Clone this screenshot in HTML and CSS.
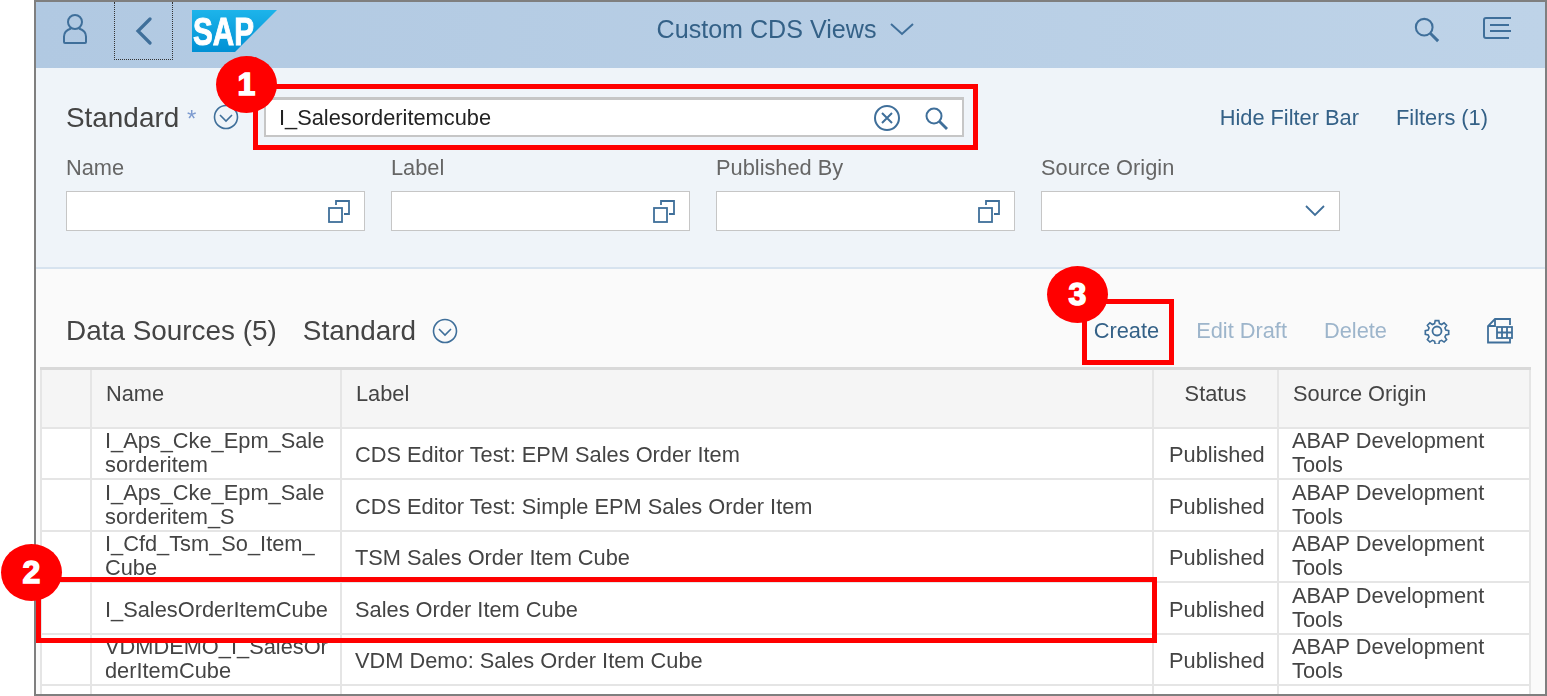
FILE: index.html
```html
<!DOCTYPE html>
<html lang="en">
<head>
    <meta charset="UTF-8">
    <title>Custom CDS Views</title>
    <link rel="stylesheet" href="styles.css">
</head>
<body>
    <div class="frame">
        <header class="shell">
            <div class="shell-left">
                <svg class="icon-user" width="24" height="30" viewBox="0 0 24 30" fill="none" stroke="#3f6f9a" stroke-width="2">
                    <circle cx="12" cy="8" r="7"/>
                    <path d="M8 14.500C3.500 16 1 18.500 1 22.500V28q0 1 1 1h20q1 0 1-1v-5.500c0-4-2.500-6.500-7-8"/>
                </svg>
                <button class="back">
                    <svg width="18" height="28" viewBox="0 0 18 28" fill="none" stroke="#3f6f9a" stroke-width="3.200" stroke-linecap="round">
                        <path d="M15 2L3 14l12 12"/>
                    </svg>
                </button>
                <svg class="logo" width="85" height="42" viewBox="0 0 85 42">
                    <defs>
                        <linearGradient id="sapBlue" x1="0" y1="0" x2="0" y2="1">
                            <stop offset="0" stop-color="#1db4ea"/>
                            <stop offset="1" stop-color="#0090d4"/>
                        </linearGradient>
                    </defs>
                    <polygon points="0,0 85,0 43,42 0,42" fill="url(#sapBlue)"/>
                    <text x="1" y="35" class="logo-text" textLength="61" lengthAdjust="spacingAndGlyphs">SAP</text>
                </svg>
            </div>
            <div class="shell-title">
                <span>Custom CDS Views</span>
                <svg width="24" height="14" viewBox="0 0 24 14" fill="none" stroke="#3f6f9a" stroke-width="2">
                    <path d="M1 2l11 10L23 2"/>
                </svg>
            </div>
            <div class="shell-right">
                <svg width="26" height="26" viewBox="0 0 28 28" fill="none" stroke="#3f6f9a" stroke-width="2.200">
                    <circle cx="11" cy="11" r="9"/>
                    <path d="M17.500 17.500L26 26" stroke-width="3.200"/>
                </svg>
                <svg width="30" height="22" viewBox="0 0 30 22" fill="none" stroke="#3f6f9a" stroke-width="2">
                    <path d="M29 1H4Q2 1 2 3v16q0 2 2 2h23M8 8h19M8 14h21"/>
                </svg>
            </div>
        </header>

        <section class="filterbar">
            <div class="filter-top">
                <span class="variant">Standard <em>*</em></span>
                <svg class="circle-down" width="26" height="26" viewBox="0 0 26 26" fill="none" stroke="#3f6f9a" stroke-width="1.600">
                    <circle cx="13" cy="13" r="11.500"/>
                    <path d="M7 11l6 6 6-6"/>
                </svg>
                <div class="search">
                    <span class="search-text">I_Salesorderitemcube</span>
                    <svg width="28" height="28" viewBox="0 0 28 28" fill="none" stroke="#3f6f9a" stroke-width="2">
                        <circle cx="14" cy="14" r="12"/>
                        <path d="M9 9l10 10M19 9L9 19"/>
                    </svg>
                    <svg width="24" height="24" viewBox="0 0 24 24" fill="none" stroke="#3f6f9a" stroke-width="2">
                        <circle cx="10" cy="10" r="7.500"/>
                        <path d="M15.500 15.500L23 23" stroke-width="2.800"/>
                    </svg>
                </div>
                <a class="link hide-bar">Hide Filter Bar</a>
                <a class="link">Filters (1)</a>
            </div>
            <div class="filter-fields">
                <div class="field">
                    <label>Name</label>
                    <div class="input">
                        <svg width="24" height="24" viewBox="0 0 24 24" fill="none" stroke="#3f6f9a" stroke-width="1.800"><path d="M9 6V2h13v13h-5"/><rect x="2" y="9" width="13" height="14"/></svg>
                    </div>
                </div>
                <div class="field">
                    <label>Label</label>
                    <div class="input">
                        <svg width="24" height="24" viewBox="0 0 24 24" fill="none" stroke="#3f6f9a" stroke-width="1.800"><path d="M9 6V2h13v13h-5"/><rect x="2" y="9" width="13" height="14"/></svg>
                    </div>
                </div>
                <div class="field">
                    <label>Published By</label>
                    <div class="input">
                        <svg width="24" height="24" viewBox="0 0 24 24" fill="none" stroke="#3f6f9a" stroke-width="1.800"><path d="M9 6V2h13v13h-5"/><rect x="2" y="9" width="13" height="14"/></svg>
                    </div>
                </div>
                <div class="field">
                    <label>Source Origin</label>
                    <div class="input">
                        <svg class="select-arrow" width="20" height="12" viewBox="0 0 20 12" fill="none" stroke="#3f6f9a" stroke-width="1.800"><path d="M1 1l9 9 9-9"/></svg>
                    </div>
                </div>
            </div>
        </section>

        <section class="results">
            <div class="toolbar">
                <span class="results-title">Data Sources (5)</span>
                <span class="results-title results-variant">Standard</span>
                <svg class="circle-down" width="26" height="26" viewBox="0 0 26 26" fill="none" stroke="#3f6f9a" stroke-width="1.600">
                    <circle cx="13" cy="13" r="11.500"/>
                    <path d="M7 11l6 6 6-6"/>
                </svg>
                <div class="actions">
                    <a class="link">Create</a>
                    <a class="link disabled">Edit Draft</a>
                    <a class="link disabled">Delete</a>
                    <svg width="26" height="26" viewBox="0 0 26 26" fill="none" stroke="#3f6f9a" stroke-width="1.800">
                        <circle cx="13" cy="13" r="4.500"/>
                        <path d="M11 1.500h4l.7 3.300 2.400 1 2.800-1.900 2.800 2.800-1.900 2.800 1 2.400 3.200.7v4l-3.200.7-1 2.400 1.900 2.800-2.800 2.800-2.800-1.900-2.400 1-.7 3.300h-4l-.7-3.300-2.400-1-2.800 1.900-2.800-2.800 1.900-2.800-1-2.400-3.200-.7v-4l3.200-.7 1-2.400-1.900-2.800 2.800-2.800 2.800 1.900 2.400-1z" transform="translate(1.300 1.300) scale(.9)"/>
                    </svg>
                    <svg width="26" height="26" viewBox="0 0 26 26" fill="none" stroke="#3f6f9a" stroke-width="1.800">
                        <path d="M23 7V1H8L1 8v16.500h22V21"/>
                        <path d="M8 1v7H1"/>
                        <rect x="10" y="9" width="15" height="11"/>
                        <path d="M10 14.500h15M15 9v11M20 9v11"/>
                    </svg>
                </div>
            </div>
            <table class="grid">
                <colgroup>
                    <col class="col-select"><col class="col-name"><col class="col-label"><col class="col-status"><col class="col-origin">
                </colgroup>
                <thead>
                    <tr><th></th><th>Name</th><th>Label</th><th class="center">Status</th><th>Source Origin</th></tr>
                </thead>
                <tbody>
                    <tr><td></td><td>I_Aps_Cke_Epm_Sale<br>sorderitem</td><td class="single">CDS Editor Test: EPM Sales Order Item</td><td class="single status">Published</td><td>ABAP Development<br>Tools</td></tr>
                    <tr><td></td><td>I_Aps_Cke_Epm_Sale<br>sorderitem_S</td><td class="single">CDS Editor Test: Simple EPM Sales Order Item</td><td class="single status">Published</td><td>ABAP Development<br>Tools</td></tr>
                    <tr><td></td><td>I_Cfd_Tsm_So_Item_<br>Cube</td><td class="single">TSM Sales Order Item Cube</td><td class="single status">Published</td><td>ABAP Development<br>Tools</td></tr>
                    <tr><td></td><td class="single">I_SalesOrderItemCube</td><td class="single">Sales Order Item Cube</td><td class="single status">Published</td><td>ABAP Development<br>Tools</td></tr>
                    <tr><td></td><td>VDMDEMO_I_SalesOr<br>derItemCube</td><td class="single">VDM Demo: Sales Order Item Cube</td><td class="single status">Published</td><td>ABAP Development<br>Tools</td></tr>
                    <tr><td></td><td></td><td></td><td></td><td></td></tr>
                </tbody>
            </table>
        </section>
    </div>

    <!-- callouts drawn on top of the screenshot -->
    <div class="mark mark-search"></div>
    <div class="mark mark-row"></div>
    <div class="mark mark-create"></div>
    <div class="badge badge-1">1</div>
    <div class="badge badge-2">2</div>
    <div class="badge badge-3">3</div>
</body>
</html>
```
FILE: styles.css
```css
html, body {
    margin: 0;
    height: 696px;
    overflow: hidden;
    background-color: #fff;
}

body {
    position: relative;
    font-family: "Liberation Sans", Arial, sans-serif;
    font-size: 21.800px;
    color: #444;
}

.frame {
    box-sizing: border-box;
    width: 1513px;
    height: 696px;
    margin-left: 34px;
    border: 2px solid #7f7f7f;
    overflow: hidden;
    background-color: #fafafa;
    filter: blur(.35px);
}

/* shell header */
.shell {
    height: 66px;
    display: flex;
    align-items: flex-start;
    justify-content: space-between;
    background: linear-gradient(90deg, #b1c9e2, #bed3e8);
}

.shell-left {
    flex: 1;
    display: flex;
    align-items: flex-start;
    padding-left: 27px;
}

.icon-user {
    margin-top: 12px;
}

.back {
    box-sizing: border-box;
    width: 59px;
    height: 58px;
    margin-left: 27px;
    padding: 0;
    display: flex;
    align-items: center;
    justify-content: center;
    background: none;
    border: 1.500px dotted #333;
    border-top: 0;
}

.logo {
    margin: 8px 0 0 19px;
}

.logo-text {
    font-family: "Liberation Sans", Arial, sans-serif;
    font-weight: bold;
    font-size: 38px;
    fill: #fff;
    stroke: #fff;
    stroke-width: 1px;
}

.shell-title {
    display: flex;
    align-items: center;
    gap: 14px;
    height: 54px;
    margin-right: 4px;
    font-size: 25.100px;
    color: #346187;
}

.shell-right {
    flex: 1;
    display: flex;
    justify-content: flex-end;
    gap: 42px;
    padding: 15px 33px 0 0;
}

/* filter bar */
.filterbar {
    box-sizing: border-box;
    height: 201px;
    padding: 29px 30px 0;
    background-color: #eff4f9;
    border-bottom: 2px solid #d7e3ef;
}

.filter-top {
    display: flex;
    align-items: center;
    height: 40px;
}

.variant {
    font-size: 27.900px;
    width: 147px;
    padding-top: 2px;
}

.variant em {
    color: #7d9bd0;
    font-style: normal;
    font-size: 24px;
}

.search {
    box-sizing: border-box;
    width: 700px;
    height: 40px;
    margin-left: 25px;
    padding: 0 14px 0 13px;
    display: flex;
    align-items: center;
    gap: 23px;
    background-color: #fff;
    border: 2px solid #c6c6c6;
    border-top-width: 3px;
    color: #222;
}

.search-text {
    flex: 1;
}

.link {
    color: #346187;
}

.filter-top .link {
    padding-top: 2px;
}

.hide-bar {
    margin: 0 37px 0 auto;
}

.filter-top .link:last-child {
    margin-right: 27px;
}

.filter-fields {
    display: flex;
    gap: 26px;
    margin-top: 14px;
}

.field {
    width: 299px;
}

.field label {
    display: block;
    height: 40px;
    line-height: 34px;
    color: #666;
}

.input {
    box-sizing: border-box;
    height: 40px;
    padding-right: 13px;
    display: flex;
    align-items: center;
    justify-content: flex-end;
    background-color: #fff;
    border: 1.500px solid #c6c6c6;
}

.select-arrow {
    margin-right: 1px;
}

/* results table */
.results {
    padding: 0 0 0 4px;
}

.toolbar {
    height: 98px;
    display: flex;
    align-items: center;
    padding: 25px 32px 0 26px;
    box-sizing: border-box;
}

.results-title {
    font-size: 27.900px;
}

.results-variant {
    margin-left: 26px;
}

.toolbar .circle-down {
    margin-left: 16px;
}

.actions {
    margin-left: auto;
    display: flex;
    align-items: center;
    gap: 37px;
}

.disabled {
    color: #9db5cb;
}

.grid {
    width: 1489px;
    table-layout: fixed;
    border-collapse: collapse;
    border-top: 3px solid #d9d9d9;
}

.col-select { width: 50px; }
.col-name { width: 250px; }
.col-label { width: 812px; }
.col-status { width: 125px; }
.col-origin { width: 252px; }

.grid th, .grid td {
    box-sizing: border-box;
    padding: 0 0 0 13px;
    border: 2px solid #e5e5e5;
    line-height: 24px;
    text-align: left;
    white-space: nowrap;
}

.grid th {
    height: 59px;
    font-weight: normal;
    background-color: #f5f5f5;
    padding-bottom: 8px;
    padding-left: 14px;
}

.grid th.center {
    text-align: center;
    padding-left: 0;
}

.grid td {
    height: 51.500px;
    background-color: #fff;
}

.grid td.single {
    padding-top: 4px;
}

.grid td.status {
    padding-left: 15px;
}

/* red callouts */
.mark {
    position: absolute;
    box-sizing: border-box;
    border: 5px solid #f00;
}

.mark-search {
    left: 253px;
    top: 84px;
    width: 725px;
    height: 66px;
}

.mark-row {
    left: 36px;
    top: 577px;
    width: 1121px;
    height: 66px;
}

.mark-create {
    left: 1082px;
    top: 299px;
    width: 92px;
    height: 66px;
}

.badge {
    position: absolute;
    width: 61px;
    height: 57px;
    border-radius: 50%;
    background-color: #f00;
    color: #fff;
    font-size: 32px;
    font-weight: bold;
    line-height: 57px;
    text-align: center;
    -webkit-text-stroke: 1.500px #fff;
}

.badge-1 { left: 216px; top: 56px; }
.badge-2 { left: 1px; top: 544px; }
.badge-3 { left: 1047px; top: 266px; }
```
